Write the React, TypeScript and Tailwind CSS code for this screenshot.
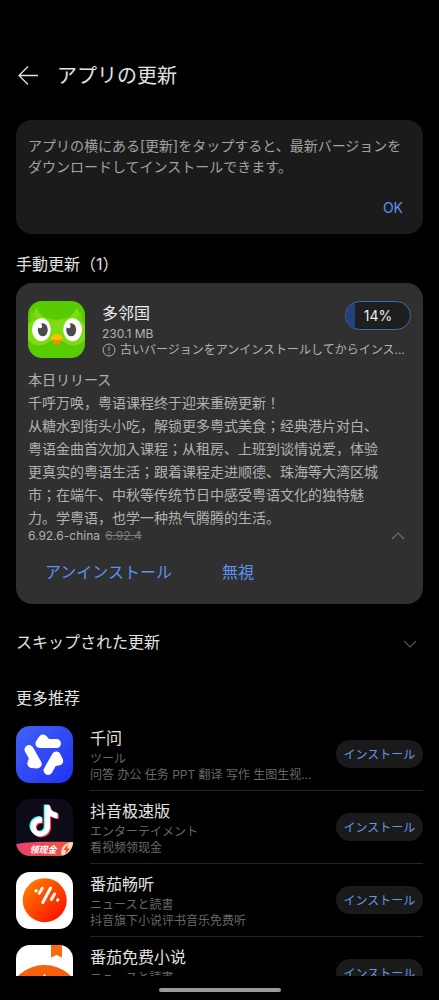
import React, { useState } from 'react';

interface StoreApp {
  id: string;
  name: string;
  category: string;
  summary?: string;
  icon: React.ReactNode;
}

const NOTE_PATH =
  'M12.525.02c1.31-.02 2.61-.01 3.91-.02.08 1.53.63 3.09 1.75 4.17 1.12 1.11 2.7 1.62 4.24 1.79v4.03c-1.44-.05-2.89-.35-4.2-.97-.57-.26-1.1-.59-1.62-.93-.01 2.92.01 5.84-.02 8.75-.08 1.4-.54 2.79-1.35 3.94-1.31 1.92-3.58 3.17-5.91 3.21-1.43.08-2.86-.31-4.08-1.03-2.02-1.19-3.44-3.37-3.65-5.71-.02-.5-.03-1-.01-1.49.18-1.9 1.12-3.72 2.58-4.96 1.66-1.44 3.98-2.13 6.15-1.72.02 1.48-.04 2.96-.04 4.44-.99-.32-2.15-.23-3.02.37-.63.41-1.11 1.04-1.36 1.75-.21.51-.15 1.07-.14 1.61.24 1.64 1.82 3.02 3.5 2.87 1.12-.01 2.19-.66 2.77-1.61.19-.33.4-.67.41-1.06.1-1.79.06-3.57.07-5.36.01-4.03-.01-8.05.02-12.07z';

const OwlIcon = () => (
  <svg viewBox="0 0 57 57" className="h-[57px] w-[57px] shrink-0 rounded-[14px]" aria-hidden="true">
    <rect width="57" height="57" fill="#58cc02" />
    <path d="M9 7C10 12 14 16 20 17.5C25 19 32 19 37 17.5C43 16 47 12 48 7C52 11 54 16 54 20L57 24V38C53 46 41 46 35 40H22C16 46 4 46 0 38V24L3 20C3 16 5 11 9 7Z" fill="#89e219" opacity="0.75" />
    <path d="M3 10L9 17L3 21Z" fill="#6fd60b" />
    <path d="M54 10L48 17L54 21Z" fill="#6fd60b" />
    <ellipse cx="13.4" cy="28.7" rx="9.4" ry="11.5" fill="#fff" />
    <ellipse cx="44.6" cy="28.7" rx="9.4" ry="11.5" fill="#fff" />
    <ellipse cx="14.8" cy="28.8" rx="5" ry="6.5" fill="#4b4b4b" />
    <ellipse cx="43.2" cy="28.8" rx="5" ry="6.5" fill="#4b4b4b" />
    <circle cx="12" cy="25" r="2.2" fill="#fff" />
    <circle cx="40.4" cy="25" r="2.2" fill="#fff" />
    <path d="M24.5 37H33C34 41 31 44 28.7 44S23.5 41 24.5 37Z" fill="#f49000" />
    <path d="M23 36.5C24 34 27 33 28.7 33S33.5 34 34.5 36.5C34.5 38.5 31 39 28.7 39S23 38.5 23 36.5Z" fill="#ffc200" />
  </svg>
);

const QianwenIcon = () => (
  <svg viewBox="0 0 57 57" className="h-[57px] w-[57px] shrink-0 rounded-[14px]" aria-hidden="true">
    <defs>
      <linearGradient id="qianwen" x1="0" y1="0" x2="1" y2="1">
        <stop offset="0" stopColor="#4263f5" />
        <stop offset="1" stopColor="#2030f5" />
      </linearGradient>
    </defs>
    <rect width="57" height="57" fill="url(#qianwen)" />
    {['rotate(0 28.5 28.5)', 'rotate(120 28.5 28.5)', 'rotate(240 28.5 28.5)'].map(turn => (
      <path
        key={turn}
        transform={turn}
        d="M31 17.5L27 13L24 17.5H40.5"
        fill="#fff"
        stroke="#fff"
        strokeWidth="9"
        strokeLinecap="round"
        strokeLinejoin="round"
      />
    ))}
  </svg>
);

const DouyinIcon = () => (
  <svg viewBox="0 0 57 57" className="h-[57px] w-[57px] shrink-0 rounded-[14px]" aria-hidden="true">
    <defs>
      <linearGradient id="douyinBanner" x1="0" y1="0" x2="1" y2="0">
        <stop offset="0" stopColor="#e8436e" />
        <stop offset="1" stopColor="#f0563a" />
      </linearGradient>
    </defs>
    <rect width="57" height="57" fill="#0d0b17" />
    <path d={NOTE_PATH} transform="translate(11.4 5.4) scale(1.3)" fill="#25f4ee" />
    <path d={NOTE_PATH} transform="translate(13.6 7.2) scale(1.3)" fill="#fe2c55" />
    <path d={NOTE_PATH} transform="translate(12.5 6.3) scale(1.3)" fill="#fff" />
    <path d="M0 45C18 42 38 43 57 43V57H0Z" fill="url(#douyinBanner)" />
    <path d="M46 57C43 51 48 43 57 43V57Z" fill="#fbd9bd" />
    <path d="M52 45L47.5 51H50.5L49 55.5L54 49.5H51Z" fill="#e24632" />
    <text x="13.5" y="53.5" fontSize="9" fontWeight="700" fontStyle="italic" fill="#fff">领现金</text>
  </svg>
);

const TomatoAudioIcon = () => (
  <svg viewBox="0 0 57 57" className="h-[57px] w-[57px] shrink-0 rounded-[14px]" aria-hidden="true">
    <defs>
      <linearGradient id="tomatoAudio" x1="0.1" y1="0.1" x2="0.9" y2="0.9">
        <stop offset="0" stopColor="#ff7d00" />
        <stop offset="1" stopColor="#fb1100" />
      </linearGradient>
    </defs>
    <rect width="57" height="57" fill="#fff" />
    <circle cx="28.7" cy="28.2" r="22" fill="url(#tomatoAudio)" />
    <path
      d="M20.3 18.5L20 19M26.3 16.3L23.3 21.3M34.6 16L26.8 30.5M38.6 22L35.4 27.5M41.9 27.7L41.6 28.2"
      stroke="#fff"
      strokeWidth="3"
      strokeLinecap="round"
    />
  </svg>
);

const TomatoNovelIcon = () => (
  <svg viewBox="0 0 57 57" className="h-[57px] w-[57px] shrink-0 rounded-[14px]" aria-hidden="true">
    <rect width="57" height="57" fill="#fff" />
    <path d="M35 0H46V12.5L40.5 10L35 12.5Z" fill="#fb6a0c" />
    <ellipse cx="28.5" cy="48" rx="33" ry="28" fill="#f9600d" />
    <path d="M28.5 28.5L30.5 33H26.5Z" fill="#fff" />
  </svg>
);

const Chevron: React.FC<{ up?: boolean }> = ({ up }) => (
  <svg viewBox="0 0 14 8" className="h-2 w-3.5" fill="none" stroke="currentColor" strokeWidth="1.2" aria-hidden="true">
    <path d={up ? 'M1 7L7 1L13 7' : 'M1 1L7 7L13 1'} />
  </svg>
);

const recommended: StoreApp[] = [
  { id: 'qianwen', name: '千问', category: 'ツール', summary: '问答 办公 任务 PPT 翻译 写作 生图生视...', icon: <QianwenIcon /> },
  { id: 'douyin', name: '抖音极速版', category: 'エンターテイメント', summary: '看视频领现金', icon: <DouyinIcon /> },
  { id: 'changting', name: '番茄畅听', category: 'ニュースと読書', summary: '抖音旗下小说评书音乐免费听', icon: <TomatoAudioIcon /> },
  { id: 'novel', name: '番茄免费小说', category: 'ニュースと読書', icon: <TomatoNovelIcon /> },
];

const UpdateCard = () => {
  const [expanded, setExpanded] = useState(true);
  const progress = 14;

  return (
    <section className="rounded-2xl bg-[#303030] px-3 pt-[18px] pb-5 text-[#b2b2b2]">
      <div className="flex gap-[17px]">
        <OwlIcon />
        <div className="min-w-0 flex-1">
          <div className="flex items-start justify-between">
            <div>
              <h3 className="text-base leading-[25px] text-[#ececec]">多邻国</h3>
              <p className="text-xs leading-4">230.1 MB</p>
            </div>
            <button className="relative h-[29px] w-[66px] overflow-hidden rounded-full border border-[#3c6cba] bg-[#1e1e1e] text-sm text-[#ececec]">
              <span className="absolute inset-y-0 left-0 bg-[#24417c]" style={{ width: `${progress}%` }} />
              <span className="relative">{progress}%</span>
            </button>
          </div>
          <p className="flex items-center gap-1 text-xs leading-4 whitespace-nowrap">
            <svg viewBox="0 0 14 14" className="h-3.5 w-3.5 shrink-0" fill="none" stroke="currentColor" aria-hidden="true">
              <circle cx="7" cy="7" r="6" />
              <path d="M7 3.5V8M7 9.5V10.7" />
            </svg>
            古いバージョンをアンインストールしてからインス...
          </p>
        </div>
      </div>

      {expanded && (
        <div className="mt-[11px] mb-px pr-6 text-sm">
          <p className="leading-[22px]">本日リリース</p>
          <p className="leading-[23px]">
            千呼万唤，粤语课程终于迎来重磅更新！
            <br />
            从糖水到街头小吃，解锁更多粤式美食；经典港片对白、粤语金曲首次加入课程；从租房、上班到谈情说爱，体验更真实的粤语生活；跟着课程走进顺德、珠海等大湾区城市；在端午、中秋等传统节日中感受粤语文化的独特魅力。学粤语，也学一种热气腾腾的生活。
          </p>
        </div>
      )}

      <div className="flex items-center justify-between pr-1.5 text-xs leading-3">
        <p>
          6.92.6-china <s className="ml-0.5 text-[#7d7d7d]">6.92.4</s>
        </p>
        <button aria-label="詳細" onClick={() => setExpanded(!expanded)} className="text-[#6e6e6e]">
          <Chevron up={expanded} />
        </button>
      </div>

      <div className="mt-[18px] flex gap-[50px] pl-[17px] text-base leading-6 text-[#5b93f0]">
        <button>アンインストール</button>
        <button>無視</button>
      </div>
    </section>
  );
};

const AppRow: React.FC<{ app: StoreApp }> = ({ app }) => (
  <li className="mb-2 flex gap-[17px]">
    {app.icon}
    <div className="flex min-w-0 flex-1 items-start justify-between border-b border-[#262626] pb-[7px]">
      <div className="min-w-0">
        <h3 className="text-base leading-[25px] text-[#e2e2e2]">{app.name}</h3>
        <p className="text-xs leading-4 text-[#686868]">{app.category}</p>
        {app.summary && <p className="truncate text-xs leading-4 text-[#686868]">{app.summary}</p>}
      </div>
      <button className="mt-3.5 h-7 w-[87px] shrink-0 rounded-full bg-[#1a1a1a] pt-0.5 text-xs text-[#6596e6]">
        インストール
      </button>
    </div>
  </li>
);

export default function App() {
  const [noticeOpen, setNoticeOpen] = useState(true);

  return (
    <div lang="ja" className="flex h-screen flex-col bg-black font-['Inter','Noto_Sans_CJK_JP','Noto_Sans_CJK_SC',sans-serif] text-[#e2e2e2]">
      <main className="min-h-0 flex-1 overflow-y-auto px-4 pt-[60px] [scrollbar-width:none]">
        <header className="mb-7 flex h-8 items-center gap-[19px] pl-0.5">
          <button aria-label="戻る">
            <svg viewBox="0 0 20 20" className="h-5 w-5" fill="none" stroke="currentColor" strokeWidth="1.3" aria-hidden="true">
              <path d="M20 9.5H1.5M10 0.5L1 9.5L10 18.5" />
            </svg>
          </button>
          <h1 className="text-xl leading-8">アプリの更新</h1>
        </header>

        {noticeOpen && (
          <section className="rounded-2xl bg-[#1b1b1b] px-3 pt-[15px] pb-3.5">
            <p className="text-sm leading-[21px] text-[#a2a2a2]">
              アプリの横にある[更新]をタップすると、最新バージョンをダウンロードしてインストールできます。
            </p>
            <div className="mt-[19px] flex justify-end pr-2">
              <button onClick={() => setNoticeOpen(false)} className="text-sm leading-6 text-[#5b93f0]">OK</button>
            </div>
          </section>
        )}

        <h2 className="mt-[18px] mb-[7px] text-base leading-6">手動更新（1）</h2>
        <UpdateCard />

        <button className="mt-[26px] flex w-full items-center justify-between pr-1.5 text-base leading-6">
          スキップされた更新
          <span className="pt-1 text-[#555555]">
            <Chevron />
          </span>
        </button>

        <h2 className="mt-8 text-base leading-6">更多推荐</h2>
        <ul className="mt-4">
          {recommended.map(app => (
            <AppRow key={app.id} app={app} />
          ))}
        </ul>
      </main>

      <div className="flex h-6 shrink-0 items-center justify-center">
        <div className="mt-1 h-1 w-[122px] rounded-full bg-[#999999]" />
      </div>
    </div>
  );
}
